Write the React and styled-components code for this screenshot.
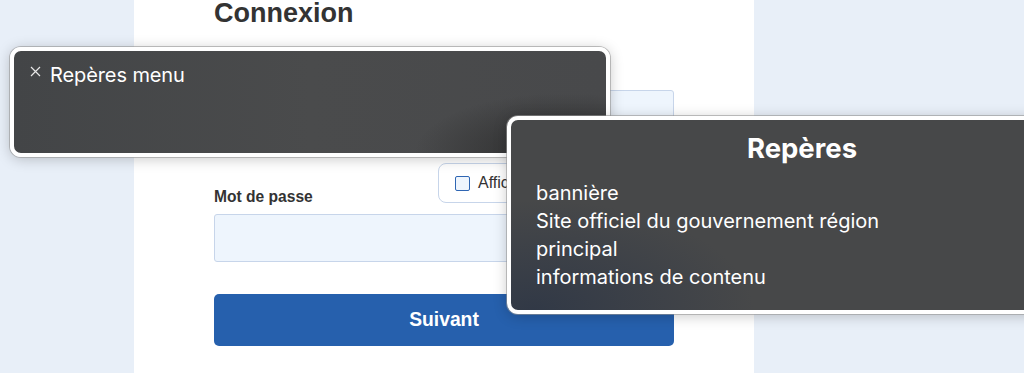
import React from "react";
import styled, { createGlobalStyle } from "styled-components";

const GlobalStyle = createGlobalStyle`
  html, body {
    margin: 0;
    padding: 0;
    background: #e8eff8;
    overflow: hidden;
  }
  * { box-sizing: border-box; }
`;

const Page = styled.div`
  position: relative;
  display: flex;
  height: 373px;
  padding-left: 134px;
  overflow: hidden;
  font-family: "Liberation Sans", Arial, sans-serif;
  color: #333;
`;

const Card = styled.main`
  width: 620px;
  background: #fff;
  padding: 0 80px;
  display: flex;
  flex-direction: column;
`;

const Title = styled.h1`
  margin: -2px 0 0;
  font-size: 27px;
  line-height: 30px;
  font-weight: 700;
  color: #333;
`;

const Label = styled.label`
  display: block;
  font-size: 15.6px;
  line-height: 20px;
  font-weight: 700;
  color: #333;
  margin-top: ${(p) => p.$mt || 0}px;
`;

const Input = styled.input`
  display: block;
  width: 100%;
  height: 48px;
  margin-top: ${(p) => p.$mt || 0}px;
  background: #eef5fd;
  border: 1px solid #c7d5ea;
  border-radius: 3px;
  font: inherit;
  outline: none;
`;

const ToggleRow = styled.div`
  display: flex;
  justify-content: space-between;
  align-items: flex-end;
  margin-top: 25px;
`;

const ToggleButton = styled.button`
  display: flex;
  align-items: center;
  gap: 8px;
  width: 236px;
  height: 40px;
  margin-bottom: 4px;
  padding: 0 16px;
  background: #fff;
  border: 1px solid #c7d5ea;
  border-radius: 8px;
  font-family: "Liberation Sans", Arial, sans-serif;
  font-size: 16px;
  color: #333;
`;

const Box = styled.span`
  width: 15px;
  height: 15px;
  border: 1.5px solid #2f66b3;
  background: #eef5fd;
  border-radius: 2px;
`;

const SubmitButton = styled.button`
  margin-top: 32px;
  width: 100%;
  height: 52px;
  border: none;
  border-radius: 5px;
  background: #2660ad;
  color: #fff;
  font-family: "Liberation Sans", Arial, sans-serif;
  font-size: 19.3px;
  font-weight: 700;
`;

const Panel = styled.section`
  position: absolute;
  left: ${(p) => p.$left}px;
  top: ${(p) => p.$top}px;
  width: ${(p) => p.$width}px;
  height: ${(p) => p.$height}px;
  border: 4px solid #fff;
  border-radius: 11px;
  box-shadow: 0 0 0 1px rgba(150, 150, 150, 0.6), 0 2px 14px rgba(0, 0, 0, 0.22);
  color: #fff;
  font-family: Inter, "Noto Sans", sans-serif;
  overflow: hidden;
`;

const MenuPanel = styled(Panel)`
  background:
    radial-gradient(ellipse 150px 60px at 93% 100%, rgba(40, 40, 40, 0.9), rgba(40, 40, 40, 0) 100%),
    linear-gradient(90deg, #434547 0%, #4a4b4c 50%, #48494b 100%);
  padding: 12px 16px;
  display: flex;
  align-items: flex-start;
  gap: 9px;
`;

const CloseIcon = styled.svg`
  margin-top: 3px;
  flex: none;
`;

const MenuText = styled.span`
  font-size: 20px;
  line-height: 24px;
  letter-spacing: -0.1px;
`;

const LandmarkPanel = styled(Panel)`
  background:
    radial-gradient(ellipse 220px 110px at 4% 100%, rgba(48, 56, 70, 0.95), rgba(48, 56, 70, 0) 100%),
    #474849;
  padding: 11px 25px 0;
`;

const PanelTitle = styled.h2`
  margin: 0;
  text-align: center;
  font-size: 27.5px;
  line-height: 34px;
  font-weight: 700;
`;

const List = styled.ul`
  list-style: none;
  margin: 14px 0 0;
  padding: 0;
`;

const Item = styled.li`
  font-size: 20px;
  line-height: 28px;
`;

export default function App() {
  return (
    <>
      <GlobalStyle />
      <Page>
        <Card>
          <Title>Connexion</Title>
          <Label $mt={38}>Nom d'utilisateur</Label>
          <Input $mt={4} />
          <ToggleRow>
            <Label>Mot de passe</Label>
            <ToggleButton>
              <Box />
              Afficher le mot de passe
            </ToggleButton>
          </ToggleRow>
          <Input type="password" $mt={7} />
          <SubmitButton>Suivant</SubmitButton>
        </Card>

        <MenuPanel $left={10} $top={47} $width={600} $height={110}>
          <CloseIcon width="11" height="11" viewBox="0 0 11 11">
            <path d="M1 1 L10 10 M10 1 L1 10" stroke="#e6e6e6" strokeWidth="1.2" fill="none" />
          </CloseIcon>
          <MenuText>Repères menu</MenuText>
        </MenuPanel>

        <LandmarkPanel $left={507} $top={116} $width={590} $height={198}>
          <PanelTitle>Repères</PanelTitle>
          <List>
            <Item>bannière</Item>
            <Item>Site officiel du gouvernement région</Item>
            <Item>principal</Item>
            <Item>informations de contenu</Item>
          </List>
        </LandmarkPanel>
      </Page>
    </>
  );
}
